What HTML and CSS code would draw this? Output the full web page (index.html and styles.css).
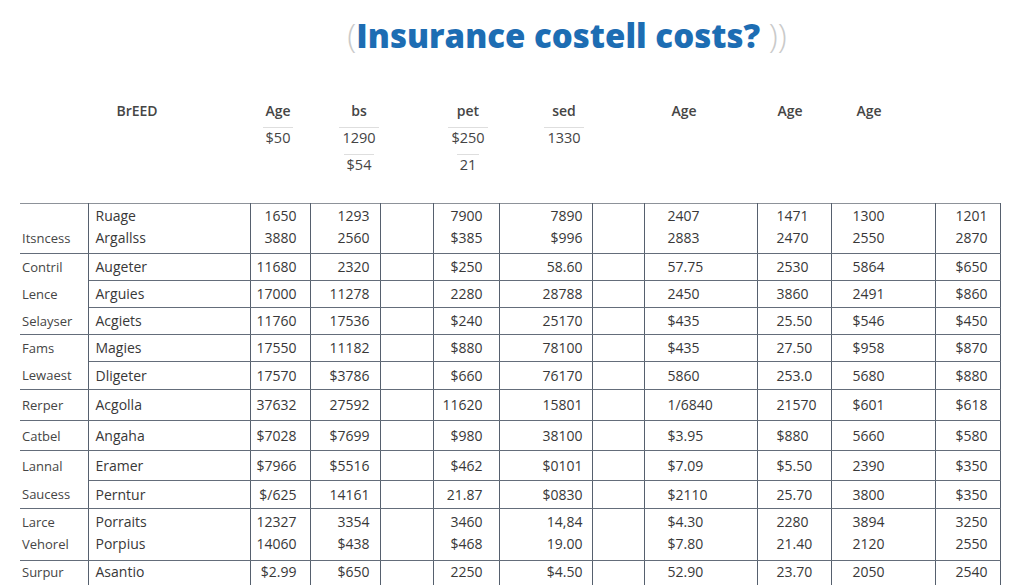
FILE: index.html
```html
<!DOCTYPE html>
<html lang="en">
<head>
<meta charset="utf-8">
<title>Insurance costell costs?</title>
<link rel="stylesheet" href="styles.css">
</head>
<body>
<div class="page">
  <h1 class="title"><span class="br">(</span>Insurance costell costs? <span class="br">))</span></h1>

  <div class="heads">
    <div class="hcol c1"><div class="ht">BrEED</div></div>
    <div class="hcol c2"><div class="ht">Age</div><div class="hv">$50</div></div>
    <div class="hcol c3"><div class="ht">bs</div><div class="hv">1290</div><div class="hv">$54</div></div>
    <div class="hcol c4"><div class="ht">pet</div><div class="hv">$250</div><div class="hv">21</div></div>
    <div class="hcol c5"><div class="ht">sed</div><div class="hv">1330</div></div>
    <div class="hcol c6"><div class="ht">Age</div></div>
    <div class="hcol c7"><div class="ht">Age</div></div>
    <div class="hcol c8"><div class="ht">Age</div></div>
  </div>

  <table class="grid">
    <colgroup>
      <col class="w1"><col class="w2"><col class="w3"><col class="w4"><col class="w5"><col class="w6">
      <col class="w7"><col class="w8"><col class="w9"><col class="w10"><col class="w11"><col class="w12">
    </colgroup>
    <tbody>
      <tr class="h50 two">
        <td class="k">&nbsp;<br>Itsncess</td><td>Ruage<br>Argallss</td><td>1650<br>3880</td><td>1293<br>2560</td><td></td><td>7900<br>$385</td>
        <td>7890<br>$996</td><td></td><td>2407<br>2883</td><td>1471<br>2470</td><td>1300<br>2550</td><td>1201<br>2870</td>
      </tr>
      <tr class="h27">
        <td class="k open">Contril</td><td>Augeter</td><td>11680</td><td>2320</td><td></td><td>$250</td>
        <td>58.60</td><td></td><td>57.75</td><td>2530</td><td>5864</td><td>$650</td>
      </tr>
      <tr class="h27">
        <td class="k open">Lence</td><td>Arguies</td><td>17000</td><td>11278</td><td></td><td>2280</td>
        <td>28788</td><td></td><td>2450</td><td>3860</td><td>2491</td><td>$860</td>
      </tr>
      <tr class="h27">
        <td class="k">Selayser</td><td>Acgiets</td><td>11760</td><td>17536</td><td></td><td>$240</td>
        <td>25170</td><td></td><td>$435</td><td>25.50</td><td>$546</td><td>$450</td>
      </tr>
      <tr class="h27">
        <td class="k open">Fams</td><td>Magies</td><td>17550</td><td>11182</td><td></td><td>$880</td>
        <td>78100</td><td></td><td>$435</td><td>27.50</td><td>$958</td><td>$870</td>
      </tr>
      <tr class="h28">
        <td class="k">Lewaest</td><td>Dligeter</td><td>17570</td><td>$3786</td><td></td><td>$660</td>
        <td>76170</td><td></td><td>5860</td><td>253.0</td><td>5680</td><td>$880</td>
      </tr>
      <tr class="h31">
        <td class="k">Rerper</td><td>Acgolla</td><td>37632</td><td>27592</td><td></td><td>11620</td>
        <td>15801</td><td></td><td>1/6840</td><td>21570</td><td>$601</td><td>$618</td>
      </tr>
      <tr class="h30">
        <td class="k">Catbel</td><td>Angaha</td><td>$7028</td><td>$7699</td><td></td><td>$980</td>
        <td>38100</td><td></td><td>$3.95</td><td>$880</td><td>5660</td><td>$580</td>
      </tr>
      <tr class="h30">
        <td class="k open">Lannal</td><td>Eramer</td><td>$7966</td><td>$5516</td><td></td><td>$462</td>
        <td>$0101</td><td></td><td>$7.09</td><td>$5.50</td><td>2390</td><td>$350</td>
      </tr>
      <tr class="h28">
        <td class="k">Saucess</td><td>Perntur</td><td>$/625</td><td>14161</td><td></td><td>21.87</td>
        <td>$0830</td><td></td><td>$2110</td><td>25.70</td><td>3800</td><td>$350</td>
      </tr>
      <tr class="h52 two">
        <td class="k">Larce<br>Vehorel</td><td>Porraits<br>Porpius</td><td>12327<br>14060</td><td>3354<br>$438</td><td></td><td>3460<br>$468</td>
        <td>14,84<br>19.00</td><td></td><td>$4.30<br>$7.80</td><td>2280<br>21.40</td><td>3894<br>2120</td><td>3250<br>2550</td>
      </tr>
      <tr class="h27 last">
        <td class="k">Surpur</td><td>Asantio</td><td>$2.99</td><td>$650</td><td></td><td>2250</td>
        <td>$4.50</td><td></td><td>52.90</td><td>23.70</td><td>2050</td><td>2540</td>
      </tr>
    </tbody>
  </table>
</div>
</body>
</html>
```

FILE: styles.css
```css
html, body {
  margin: 0;
  padding: 0;
  background: #ffffff;
}

body {
  font-family: "Open Sans", "Liberation Sans", sans-serif;
  color: #333333;
}

.page {
  width: 1024px;
  height: 585px;
  overflow: hidden;
  background: #ffffff;
}

/* ---------- title ---------- */
.title {
  margin: 0;
  height: 58px;
  padding: 14px 0 0 110px;
  font-size: 33px;
  line-height: 44px;
  font-weight: 800;
  color: #1d6db3;
  text-align: center;
  white-space: nowrap;
}

.br {
  color: #cacaca;
  font-weight: 300;
}

/* ---------- loose header block ---------- */
.heads {
  display: flex;
  align-items: flex-start;
  padding-left: 107px;
  margin-top: 29px;
  margin-bottom: 28px;
}

.hcol {
  width: 60px;
  display: flex;
  flex-direction: column;
  align-items: center;
  flex: none;
}

.c2 { margin-left: 81px; }
.c3 { margin-left: 21px; }
.c4 { margin-left: 49px; }
.c5 { margin-left: 36px; }
.c6 { margin-left: 60px; }
.c7 { margin-left: 46px; }
.c8 { margin-left: 19px; }

.ht {
  font-size: 14px;
  line-height: 20px;
  font-weight: 600;
  color: #454545;
}

.hv {
  margin-top: 6px;
  padding: 0 3px;
  border-top: 1px solid #dedede;
  font-size: 14.5px;
  line-height: 20px;
  color: #444444;
}

/* ---------- table ---------- */
.grid {
  margin-left: 20px;
  width: 980px;
  border-collapse: collapse;
  table-layout: fixed;
  font-size: 14px;
  color: #383838;
}

.w1 { width: 68px; }
.w2 { width: 162px; }
.w3 { width: 60px; }
.w4 { width: 70px; }
.w5 { width: 53px; }
.w6 { width: 66px; }
.w7 { width: 93px; }
.w8 { width: 52px; }
.w9 { width: 113px; }
.w10 { width: 74px; }
.w11 { width: 104px; }
.w12 { width: 65px; }

.grid td {
  padding: 0;
  border-right: 1px solid #56606e;
  border-bottom: 1px solid #646d7a;
  vertical-align: middle;
  line-height: 22px;
  white-space: nowrap;
  overflow: hidden;
}

.grid tr:first-child td {
  border-top: 1px solid #8d9299;
}

.grid td.open {
  border-bottom: none;
}

.h27 { height: 27px; }
.h28 { height: 28px; }
.h30 { height: 30px; }
.h31 { height: 31px; }
.h50 { height: 50px; }
.h52 { height: 52px; }

.two td {
  line-height: 22px;
}

.h50 td {
  padding-bottom: 3px;
}

.h52 td {
  padding-bottom: 4px;
}

.last td {
  padding-bottom: 8px;
}

.grid td.k {
  padding-left: 2px;
  font-size: 13px;
  color: #454545;
}

.grid td:nth-child(2) { padding-left: 7px; }
.grid td:nth-child(3) { text-align: right; padding-right: 13px; }
.grid td:nth-child(4) { text-align: right; padding-right: 10px; }
.grid td:nth-child(6) { text-align: right; padding-right: 16px; }
.grid td:nth-child(7) { text-align: right; padding-right: 9px; }
.grid td:nth-child(9) { padding-left: 23px; }
.grid td:nth-child(10) { padding-left: 19px; }
.grid td:nth-child(11) { padding-left: 21px; }
.grid td:nth-child(12) { text-align: right; padding-right: 12px; }
```
